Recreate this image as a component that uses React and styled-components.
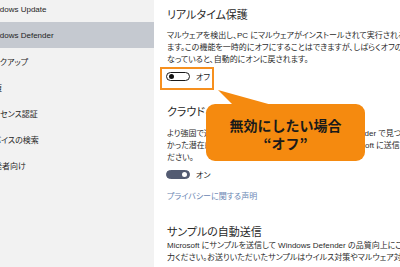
import React from "react";
import styled, { createGlobalStyle } from "styled-components";

const Global = createGlobalStyle`
  html, body { margin: 0; padding: 0; background: #ffffff; }
  body {
    font-family: "Liberation Sans", "Noto Sans CJK JP", sans-serif;
    font-feature-settings: "palt";
    -webkit-font-smoothing: antialiased;
  }
`;

const Window = styled.div`
  display: flex;
  width: 400px;
  height: 267px;
  overflow: hidden;
  background: #ffffff;
`;

const Sidebar = styled.nav`
  flex: 0 0 154px;
  background: #f2f2f2;
  overflow: hidden;
`;

const NavList = styled.ul`
  list-style: none;
  margin: -4px 0 0 0;
  padding: 0;
`;

const NavItem = styled.li`
  height: 26px;
  display: flex;
  align-items: center;
  text-indent: -14px;
  white-space: nowrap;
  font-size: 8px;
  color: #1f1f1f;
  background: ${(p) => (p.$active ? "#c5c9d0" : "transparent")};
`;

const Content = styled.main`
  position: relative;
  flex: 1;
  padding: 7px 0 0 13px;
  overflow: hidden;
  display: flex;
  flex-direction: column;
`;

const Heading = styled.h2`
  margin: ${(p) => p.$top || 0}px 0 ${(p) => p.$bottom || 0}px 0;
  font-size: 11px;
  line-height: 16px;
  font-weight: 400;
  color: #2a2a2a;
  white-space: nowrap;
`;

const Para = styled.p`
  margin: 0;
  font-size: 8px;
  line-height: 12px;
  color: #2b2b2b;
  white-space: nowrap;
`;

const ToggleRow = styled.div`
  position: relative;
  display: flex;
  align-items: center;
  gap: 6px;
  height: 12px;
  margin-top: ${(p) => p.$top || 0}px;
  margin-left: -1px;
  font-size: 8px;
  color: #222;
`;

const Switch = styled.span`
  box-sizing: border-box;
  width: 24px;
  height: 9px;
  border-radius: 5px;
  display: flex;
  align-items: center;
  justify-content: ${(p) => (p.$on ? "flex-end" : "flex-start")};
  padding: 0 2px;
  border: 1.4px solid ${(p) => (p.$on ? "#535b72" : "#1a1a1a")};
  background: ${(p) => (p.$on ? "#535b72" : "#ffffff")};

  &::after {
    content: "";
    width: 5px;
    height: 5px;
    border-radius: 50%;
    background: ${(p) => (p.$on ? "#ffffff" : "#111111")};
  }
`;

const Highlight = styled.span`
  position: absolute;
  box-sizing: border-box;
  left: -6px;
  top: -3px;
  width: 54px;
  height: 23px;
  border: 2px solid #f6901f;
  pointer-events: none;
`;

const PrivacyLink = styled.a`
  margin-top: 11px;
  font-size: 8px;
  line-height: 12px;
  color: #6a86b3;
  text-decoration: none;
  white-space: nowrap;
`;

const Callout = styled.div`
  position: absolute;
  left: 52px;
  top: 104px;
  width: 159px;
  height: 57px;
  box-sizing: border-box;
  padding-top: 12px;
  border-radius: 9px;
  background: #f58a0f;
  display: flex;
  flex-direction: column;
  align-items: center;
  font-family: "Noto Sans CJK JP", sans-serif;
  font-feature-settings: normal;
  font-weight: 700;
  font-size: 14px;
  line-height: 18px;
  color: #1a1a1a;

  &::before {
    content: "";
    position: absolute;
    left: 12px;
    top: -14px;
    width: 54px;
    height: 15px;
    background: #f58a0f;
    clip-path: polygon(0 0, 15px 100%, 100% 100%);
  }
`;

const CalloutLine = styled.span`
  white-space: nowrap;
`;

const navItems = [
  "Windows Update",
  "Windows Defender",
  "バックアップ",
  "回復",
  "ライセンス認証",
  "デバイスの検索",
  "開発者向け",
];

export default function App() {
  return (
    <>
      <Global />
      <Window>
        <Sidebar>
          <NavList>
            {navItems.map((t) => (
              <NavItem key={t} $active={t === "Windows Defender"}>
                {t}
              </NavItem>
            ))}
          </NavList>
        </Sidebar>
        <Content>
          <Heading $bottom={7}>リアルタイム保護</Heading>
          <Para>マルウェアを検出し、PC にマルウェアがインストールされて実行されるのを防ぎ</Para>
          <Para>ます。この機能を一時的にオフにすることはできますが、しばらくオフのままに</Para>
          <Para>なっていると、自動的にオンに戻されます。</Para>
          <ToggleRow $top={4}>
            <Switch />
            <span>オフ</span>
            <Highlight />
          </ToggleRow>

          <Heading $top={22} $bottom={8}>クラウドベースの保護</Heading>
          <Para>より強固で迅速な保護を実現するために、Windows Defender で見つ</Para>
          <Para>かった潜在的なセキュリティの問題に関する情報を Microsoft に送信してく</Para>
          <Para>ださい。</Para>
          <ToggleRow $top={4}>
            <Switch $on />
            <span>オン</span>
          </ToggleRow>
          <PrivacyLink href="#">プライバシーに関する声明</PrivacyLink>

          <Heading $top={21}>サンプルの自動送信</Heading>
          <Para>Microsoft にサンプルを送信して Windows Defender の品質向上にご協</Para>
          <Para>力ください。お送りいただいたサンプルはウイルス対策やマルウェア対策に役</Para>

          <Callout>
            <CalloutLine>無効にしたい場合</CalloutLine>
            <CalloutLine>“オフ”</CalloutLine>
          </Callout>
        </Content>
      </Window>
    </>
  );
}
